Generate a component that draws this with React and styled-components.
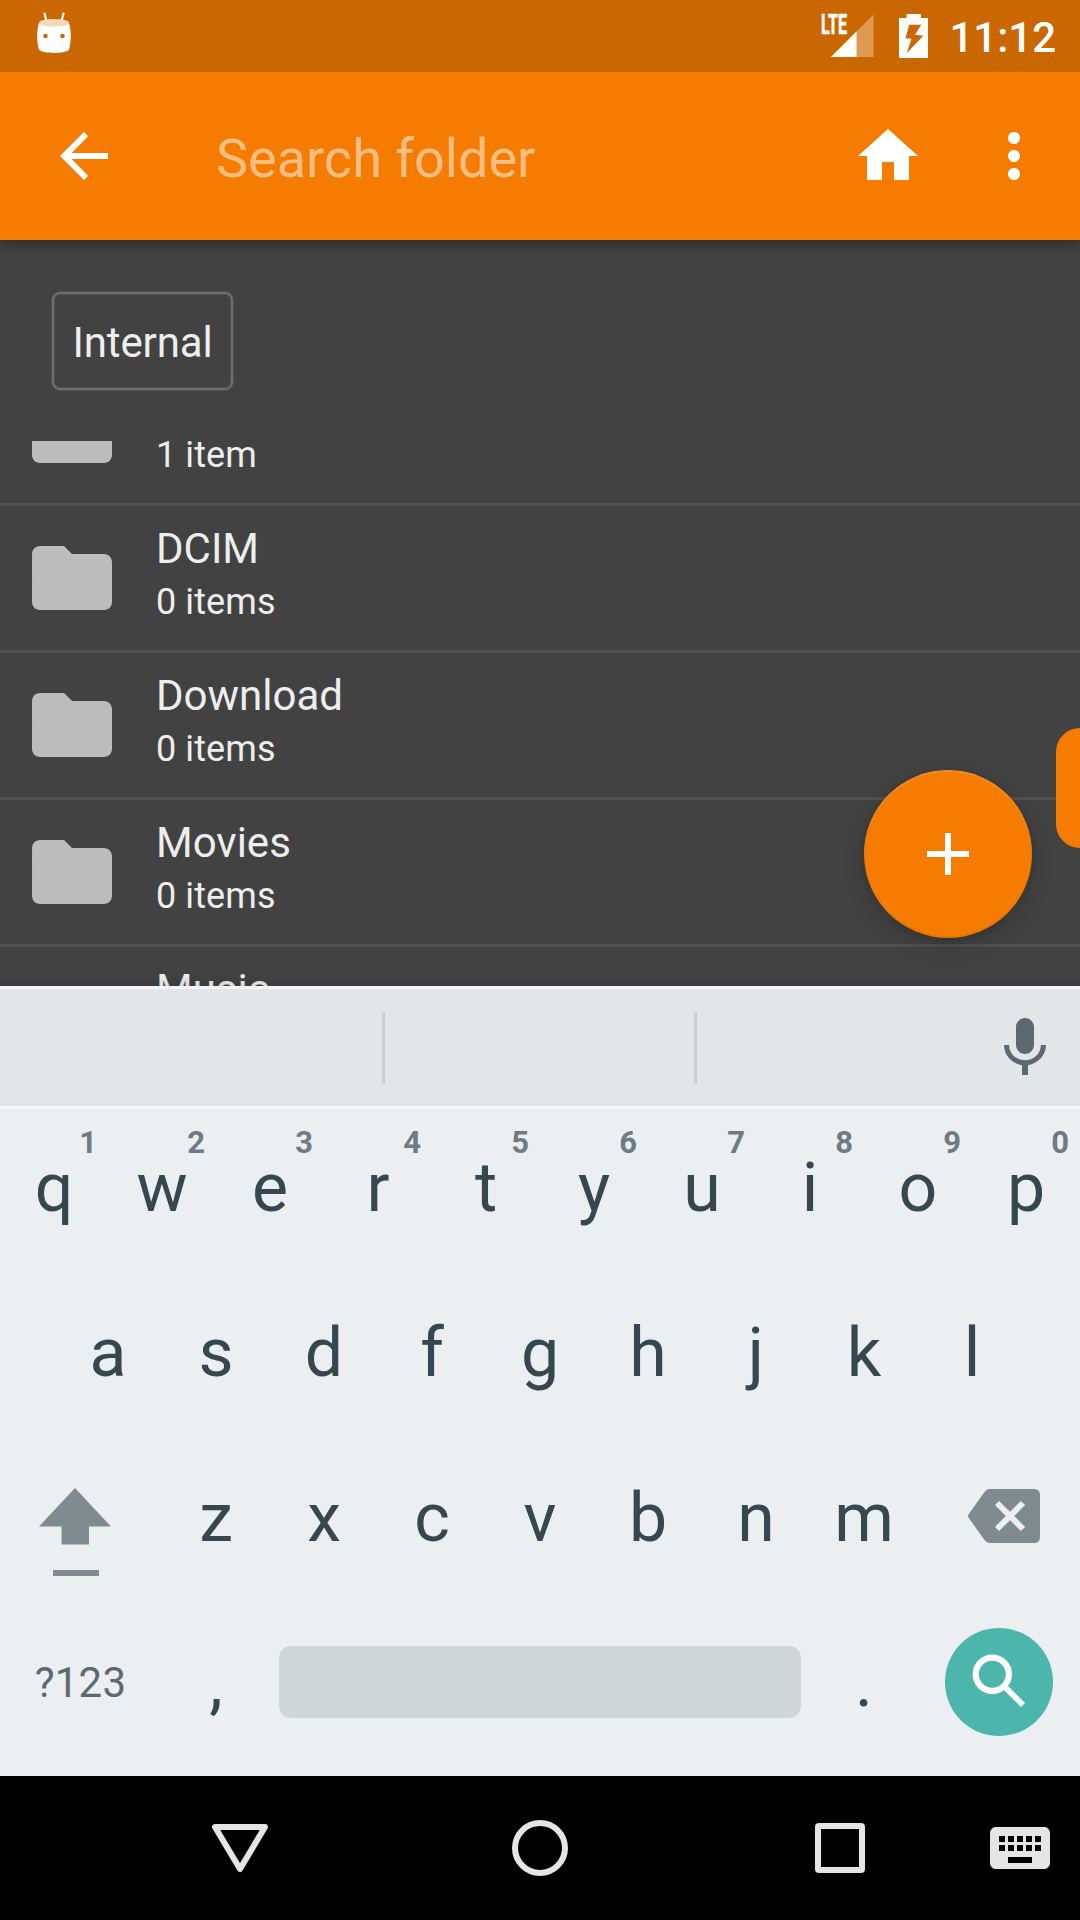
import React from "react";
import styled, { createGlobalStyle } from "styled-components";

const GlobalStyle = createGlobalStyle`
  *, *::before, *::after { box-sizing: border-box; }
  body { margin: 0; background: #000; font-family: Roboto, "Noto Sans", sans-serif; }
  svg { display: block; flex: none; }
`;

const orange = "#f57c00";
const ink = "#37474f";
const mutedInk = "#5c696f";

const Screen = styled.div`
  width: 1080px;
  height: 1920px;
  display: flex;
  flex-direction: column;
  overflow: hidden;
`;

/* ---------- status bar ---------- */

const StatusBar = styled.header`
  position: relative;
  z-index: 2;
  height: 72px;
  flex: none;
  display: flex;
  align-items: flex-start;
  justify-content: space-between;
  padding: 10px 24px 0 34px;
  background: #cb6700;
`;

const StatusGroup = styled.div`
  display: flex;
  align-items: flex-start;
`;

const Network = styled.span`
  width: 27px;
  height: 28px;
  margin: 1px -17px 0 1px;
  color: #fff;
  font-size: 27px;
  font-weight: 700;
  line-height: 28px;
  transform: scaleX(0.6);
  transform-origin: 0 0;
  -webkit-text-stroke: 0.6px #fff;
`;

const Battery = styled.div`
  margin-left: 25px;
`;

const Clock = styled.time`
  margin-left: 20px;
  padding-top: 3px;
  color: #fff;
  font-size: 42px;
  font-weight: 500;
  line-height: 49px;
`;

/* ---------- app bar ---------- */

const AppBar = styled.nav`
  position: relative;
  z-index: 1;
  height: 168px;
  flex: none;
  display: flex;
  align-items: center;
  padding: 0 30px 0 48px;
  background: ${orange};
  box-shadow: 0 3px 12px rgba(0, 0, 0, 0.4);
`;

const SearchHint = styled.div`
  flex: 1;
  margin-left: 96px;
  padding-top: 6px;
  color: rgba(255, 255, 255, 0.5);
  font-size: 54px;
  line-height: 64px;
`;

const AppActions = styled.div`
  display: flex;
  gap: 54px;
`;

/* ---------- folder list ---------- */

const Content = styled.main`
  position: relative;
  height: 746px;
  flex: none;
  display: flex;
  flex-direction: column;
  background: #424242;
  overflow: hidden;
`;

const Breadcrumbs = styled.div`
  height: 201px;
  flex: none;
  padding: 52px 52px 0;
  display: flex;
  align-items: flex-start;
`;

const Crumb = styled.div`
  width: 181px;
  height: 98px;
  display: flex;
  justify-content: center;
  padding-top: 24px;
  border: 2px solid #6e6e6e;
  border-radius: 8px;
  box-shadow: 0 0 0 1px #505050, inset 0 0 0 1px #505050;
  color: #eee;
  font-size: 42px;
  letter-spacing: -0.15px;
  line-height: 49px;
`;

const FolderList = styled.div`
  flex: 1;
  min-height: 0;
  overflow: hidden;
  display: flex;
  flex-direction: column;
`;

const Row = styled.div`
  height: 147px;
  flex: none;
  display: flex;
  gap: 36px;
  margin-top: ${(p) => (p.$scrolled ? "-82px" : "0")};
  padding: 0 24px;
  border-bottom: 3px solid #515151;
  color: #eee;
`;

const RowIcon = styled.div`
  display: flex;
  align-items: center;
`;

const RowText = styled.div`
  display: flex;
  flex-direction: column;
  gap: 15px;
  padding-top: 18px;
`;

const Name = styled.div`
  height: 49px;
  font-size: 42px;
  line-height: 49px;
`;

const Count = styled.div`
  font-size: 36px;
  letter-spacing: 0.1px;
  line-height: 28px;
`;

const ScrollHandle = styled.div`
  position: absolute;
  top: 488px;
  right: -24px;
  width: 48px;
  height: 120px;
  border-radius: 24px;
  background: ${orange};
`;

const AddButton = styled.div`
  position: absolute;
  top: 530px;
  right: 48px;
  width: 168px;
  height: 168px;
  display: flex;
  align-items: center;
  justify-content: center;
  border-radius: 50%;
  background: ${orange};
  box-shadow: 0 9px 20px rgba(0, 0, 0, 0.17), 0 0 6px rgba(0, 0, 0, 0.1),
    inset 0 2px 1px rgba(255, 255, 255, 0.13), inset 0 -2px 1px rgba(0, 0, 0, 0.06);
`;

const BottomShade = styled.div`
  position: absolute;
  left: 0;
  right: 0;
  bottom: 0;
  height: 12px;
  background: linear-gradient(rgba(0, 0, 0, 0), rgba(0, 0, 0, 0.09));
`;

/* ---------- keyboard ---------- */

const SuggestionStrip = styled.div`
  height: 123px;
  flex: none;
  display: flex;
  align-items: center;
  border-top: 3px solid #f4f5f8;
  border-bottom: 3px solid #f6f7f9;
  background: #e2e6e9;
`;

const Suggestion = styled.div`
  width: ${(p) => p.$width}px;
  height: 72px;
  border-right: ${(p) => (p.$last ? "0" : "3px solid #cbcfd2")};
`;

const VoiceInput = styled.div`
  padding-top: 1px;
`;

const Keyboard = styled.section`
  height: 667px;
  flex: none;
  display: flex;
  flex-direction: column;
  gap: 9px;
  background: #ebeff2;
`;

const KeyRow = styled.div`
  height: 156px;
  flex: none;
  display: flex;
  justify-content: center;
`;

const Key = styled.div`
  position: relative;
  width: 108px;
  display: flex;
  align-items: center;
  justify-content: center;
  padding-top: 2px;
  color: ${ink};
  font-size: 68px;
  line-height: 80px;
`;

const WideKey = styled.div`
  width: ${(p) => p.$width}px;
  display: flex;
  align-items: center;
  justify-content: center;
`;

const SideKey = styled.div`
  width: 162px;
  padding: ${(p) => p.$top}px 0 0 ${(p) => p.$left}px;
`;

const Hint = styled.span`
  position: absolute;
  top: 16px;
  right: 11px;
  color: #6f7b81;
  font-size: 31px;
  font-weight: 700;
  line-height: 36px;
`;

const SymbolLabel = styled.span`
  margin-right: 1px;
  color: ${mutedInk};
  font-size: 42px;
  letter-spacing: 0.2px;
  line-height: 49px;
`;

const SpaceBar = styled.div`
  width: 522px;
  height: 72px;
  border-radius: 12px;
  background: #d1d6d9;
`;

const SearchKey = styled.div`
  width: 108px;
  height: 108px;
  border-radius: 50%;
  background: #4db6ac;
`;

/* ---------- navigation bar ---------- */

const NavBar = styled.footer`
  height: 144px;
  flex: none;
  display: grid;
  grid-template-columns: 90px 300px 300px 300px 90px;
  place-items: center;
  background: #000;
`;

const KeyboardSwitch = styled.div`
  justify-self: start;
  margin-left: -6px;
`;

/* ---------- icons ---------- */

const Material = ({ d, size = 72, fill = "#fff" }) => (
  <svg width={size} height={size} viewBox="0 0 24 24" fill={fill}>
    <path d={d} />
  </svg>
);

const paths = {
  back: "M20 11H7.83l5.59-5.59L12 4l-8 8 8 8 1.41-1.41L7.83 13H20v-2z",
  home: "M10 20v-6h4v6h5v-8h3L12 3 2 12h3v8z",
  more: "M12 8c1.1 0 2-.9 2-2s-.9-2-2-2-2 .9-2 2 .9 2 2 2zm0 2c-1.1 0-2 .9-2 2s.9 2 2 2 2-.9 2-2-.9-2-2-2zm0 6c-1.1 0-2 .9-2 2s.9 2 2 2 2-.9 2-2-.9-2-2-2z",
  add: "M19 13h-6v6h-2v-6H5v-2h6V5h2v6h6v2z",
  folder:
    "M10 4H4c-1.1 0-1.99.9-1.99 2L2 18c0 1.1.9 2 2 2h16c1.1 0 2-.9 2-2V8c0-1.1-.9-2-2-2h-8l-2-2z",
  mic: "M12 14c1.66 0 2.99-1.34 2.99-3L15 5c0-1.66-1.34-3-3-3S9 3.34 9 5v6c0 1.66 1.34 3 3 3zm5.3-3c0 3-2.54 5.1-5.3 5.1S6.7 14 6.7 11H5c0 3.41 2.72 6.23 6 6.72V21h2v-3.28c3.28-.48 6-3.3 6-6.72h-1.7z",
  keyboard:
    "M20 5H4c-1.1 0-1.99.9-1.99 2L2 17c0 1.1.9 2 2 2h16c1.1 0 2-.9 2-2V7c0-1.1-.9-2-2-2zm-9 3h2v2h-2V8zm0 3h2v2h-2v-2zM8 8h2v2H8V8zm0 3h2v2H8v-2zm-1 2H5v-2h2v2zm0-3H5V8h2v2zm9 7H8v-2h8v2zm0-4h-2v-2h2v2zm0-3h-2V8h2v2zm3 3h-2v-2h2v2zm0-3h-2V8h2v2z",
};

const MascotIcon = () => (
  <svg width="40" height="46" viewBox="0 0 40 46">
    <path d="M10.500 3.500l2 8M29.500 3.500l-2 8" stroke="#fff" strokeWidth="2.2" strokeLinecap="round" />
    <path
      d="M5 13C10 17 30 17 35 13C37.400 20 37.400 32 35 39.500C33 44 7 44 5 39.500C2.600 32 2.600 20 5 13z"
      fill="#fff"
    />
    <ellipse cx="20" cy="12.800" rx="15" ry="3.900" fill="#f5d9bd" />
    <circle cx="11.500" cy="26" r="2.300" fill="#cb6700" />
    <circle cx="28.500" cy="26" r="2.300" fill="#cb6700" />
  </svg>
);

const SignalIcon = () => (
  <svg width="43" height="48" viewBox="0 0 43 48">
    <path d="M0 47L42.500 4.500V47z" fill="#de9a52" />
    <path d="M0 47L25.500 21.500V47z" fill="#fff" />
  </svg>
);

const BatteryIcon = () => (
  <svg width="30" height="48" viewBox="0 0 30 48">
    <path
      fillRule="evenodd"
      fill="#fff"
      d="M7.500 4H22V8H29V48H0V8H7.500zM10.200 14.700L6.500 28.300L12.400 28.700L7.700 43.300L24.300 25.700L16 24.700L22.300 14.700z"
    />
  </svg>
);

const ShiftIcon = () => (
  <svg width="72" height="90" viewBox="0 0 72 90" fill="#808b8f">
    <path d="M36 0L72 38.500H50V56.500H22.500V38.500H0z" />
    <rect x="14" y="82" width="46" height="6" />
  </svg>
);

const BackspaceIcon = () => (
  <svg width="72" height="54" viewBox="0 0 72 54">
    <path
      d="M21.500 0H66Q72 0 72 6V48Q72 54 66 54H21.500Q18.500 54 16.500 51L.8 29Q-.6 27 .8 25L16.500 3Q18.500 0 21.500 0z"
      fill="#808b8f"
    />
    <path d="M29 14L55 40M55 14L29 40" stroke="#ebeff2" strokeWidth="5.9" />
  </svg>
);

const MagnifierIcon = () => (
  <svg width="108" height="108" viewBox="0 0 108 108" fill="none" stroke="#fff">
    <circle cx="47.300" cy="46.300" r="16.600" strokeWidth="6.2" />
    <path d="M58.500 57.500L62.500 61.500" strokeWidth="4" />
    <path d="M61.500 60.500L78 77" strokeWidth="5.8" />
  </svg>
);

const BackNavIcon = () => (
  <svg width="60" height="60" viewBox="0 0 60 60">
    <path
      d="M5 9H55L30 51z"
      fill="none"
      stroke="#e5e5e5"
      strokeWidth="6"
      strokeLinejoin="round"
    />
  </svg>
);

const HomeNavIcon = () => (
  <svg width="60" height="60" viewBox="0 0 60 60">
    <circle cx="30" cy="30" r="25" fill="none" stroke="#e5e5e5" strokeWidth="6" />
  </svg>
);

const RecentsNavIcon = () => (
  <svg width="60" height="60" viewBox="0 0 60 60">
    <path
      fillRule="evenodd"
      fill="#e5e5e5"
      d="M9 5H51Q55 5 55 9V51Q55 55 51 55H9Q5 55 5 51V9Q5 5 9 5zM11 11V49H49V11z"
    />
  </svg>
);

/* ---------- data ---------- */

const folders = [
  { id: "first", count: "1 item", scrolled: true },
  { id: "dcim", name: "DCIM", count: "0 items" },
  { id: "download", name: "Download", count: "0 items" },
  { id: "movies", name: "Movies", count: "0 items" },
  { id: "music", name: "Music" },
];

const topRow = [..."qwertyuiop"];
const homeRow = [..."asdfghjkl"];
const bottomRow = [..."zxcvbnm"];

export default function App() {
  return (
    <>
      <GlobalStyle />
      <Screen>
        <StatusBar>
          <MascotIcon />
          <StatusGroup>
            <Network>LTE</Network>
            <SignalIcon />
            <Battery>
              <BatteryIcon />
            </Battery>
            <Clock>11:12</Clock>
          </StatusGroup>
        </StatusBar>

        <AppBar>
          <Material d={paths.back} />
          <SearchHint>Search folder</SearchHint>
          <AppActions>
            <Material d={paths.home} />
            <Material d={paths.more} />
          </AppActions>
        </AppBar>

        <Content>
          <Breadcrumbs>
            <Crumb>Internal</Crumb>
          </Breadcrumbs>
          <FolderList>
            {folders.map((f) => (
              <Row key={f.id} $scrolled={f.scrolled}>
                <RowIcon>
                  <Material d={paths.folder} size={96} fill="#bcbcbc" />
                </RowIcon>
                <RowText>
                  <Name>{f.name}</Name>
                  {f.count && <Count>{f.count}</Count>}
                </RowText>
              </Row>
            ))}
          </FolderList>
          <ScrollHandle />
          <AddButton>
            <Material d={paths.add} />
          </AddButton>
          <BottomShade />
        </Content>

        <SuggestionStrip>
          <Suggestion $width={385} />
          <Suggestion $width={312} />
          <Suggestion $width={292} $last />
          <VoiceInput>
            <Material d={paths.mic} fill={mutedInk} />
          </VoiceInput>
        </SuggestionStrip>

        <Keyboard>
          <KeyRow>
            {topRow.map((k, i) => (
              <Key key={k}>
                {k}
                <Hint>{(i + 1) % 10}</Hint>
              </Key>
            ))}
          </KeyRow>
          <KeyRow>
            {homeRow.map((k) => (
              <Key key={k}>{k}</Key>
            ))}
          </KeyRow>
          <KeyRow>
            <SideKey $top={49} $left={39}>
              <ShiftIcon />
            </SideKey>
            {bottomRow.map((k) => (
              <Key key={k}>{k}</Key>
            ))}
            <SideKey $top={50} $left={50}>
              <BackspaceIcon />
            </SideKey>
          </KeyRow>
          <KeyRow>
            <WideKey $width={162}>
              <SymbolLabel>?123</SymbolLabel>
            </WideKey>
            <Key>,</Key>
            <WideKey $width={540}>
              <SpaceBar />
            </WideKey>
            <Key>.</Key>
            <WideKey $width={162}>
              <SearchKey>
                <MagnifierIcon />
              </SearchKey>
            </WideKey>
          </KeyRow>
        </Keyboard>

        <NavBar>
          <span />
          <BackNavIcon />
          <HomeNavIcon />
          <RecentsNavIcon />
          <KeyboardSwitch>
            <Material d={paths.keyboard} fill="#e5e5e5" />
          </KeyboardSwitch>
        </NavBar>
      </Screen>
    </>
  );
}
